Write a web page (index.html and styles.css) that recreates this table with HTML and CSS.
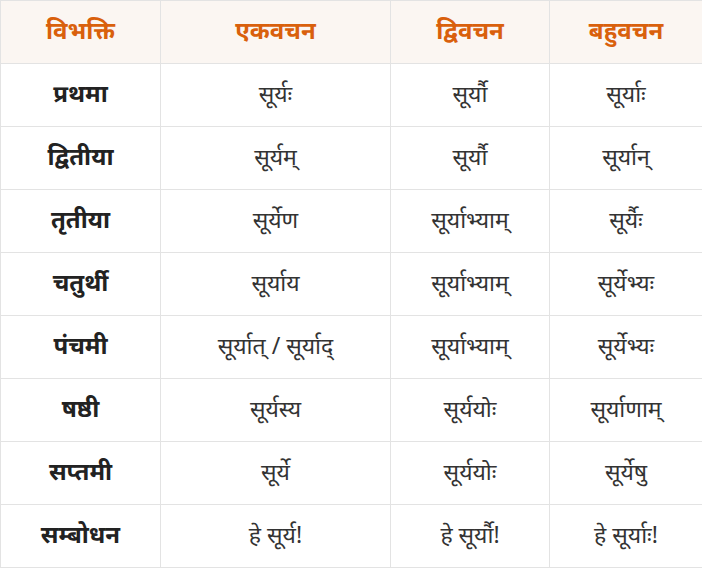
FILE: index.html
```html
<!DOCTYPE html>
<html lang="sa">
<head>
<meta charset="utf-8">
<title>सूर्य शब्द रूप</title>
<link rel="stylesheet" href="styles.css">
</head>
<body>
<table class="forms">
  <colgroup>
    <col class="c1"><col class="c2"><col class="c3"><col class="c4">
  </colgroup>
  <thead>
    <tr><th>विभक्ति</th><th>एकवचन</th><th>द्विवचन</th><th>बहुवचन</th></tr>
  </thead>
  <tbody>
    <tr><td class="case">प्रथमा</td><td>सूर्यः</td><td>सूर्यौ</td><td>सूर्याः</td></tr>
    <tr><td class="case">द्वितीया</td><td>सूर्यम्</td><td>सूर्यौ</td><td>सूर्यान्</td></tr>
    <tr><td class="case">तृतीया</td><td>सूर्येण</td><td>सूर्याभ्याम्</td><td>सूर्यैः</td></tr>
    <tr><td class="case">चतुर्थी</td><td>सूर्याय</td><td>सूर्याभ्याम्</td><td>सूर्येभ्यः</td></tr>
    <tr><td class="case">पंचमी</td><td>सूर्यात् / सूर्याद्</td><td>सूर्याभ्याम्</td><td>सूर्येभ्यः</td></tr>
    <tr><td class="case">षष्ठी</td><td>सूर्यस्य</td><td>सूर्ययोः</td><td>सूर्याणाम्</td></tr>
    <tr><td class="case">सप्तमी</td><td>सूर्ये</td><td>सूर्ययोः</td><td>सूर्येषु</td></tr>
    <tr><td class="case">सम्बोधन</td><td>हे सूर्य!</td><td>हे सूर्यौ!</td><td>हे सूर्याः!</td></tr>
  </tbody>
</table>
</body>
</html>
```

FILE: styles.css
```css
html, body {
  margin: 0;
  padding: 0;
  background: #ffffff;
}
.forms {
  width: 702px;
  border-collapse: collapse;
  table-layout: fixed;
  font-family: "Noto Sans", "Noto Sans Devanagari", sans-serif;
  font-size: 23px;
  color: #333333;
}
.c1 { width: 160px; }
.c2 { width: 230px; }
.c3 { width: 159px; }
.c4 { width: 153px; }
.forms th,
.forms td {
  border: 1px solid #e3e3e3;
  height: 63px;
  box-sizing: border-box;
  padding: 0 0 3px;
  text-align: center;
  vertical-align: middle;
  line-height: 1.2;
}
.forms th {
  background: #fbf6f2;
  color: #d9600c;
  font-weight: bold;
  font-size: 24px;
}
.forms td.case {
  font-weight: bold;
  font-size: 24px;
  color: #222222;
}
```
